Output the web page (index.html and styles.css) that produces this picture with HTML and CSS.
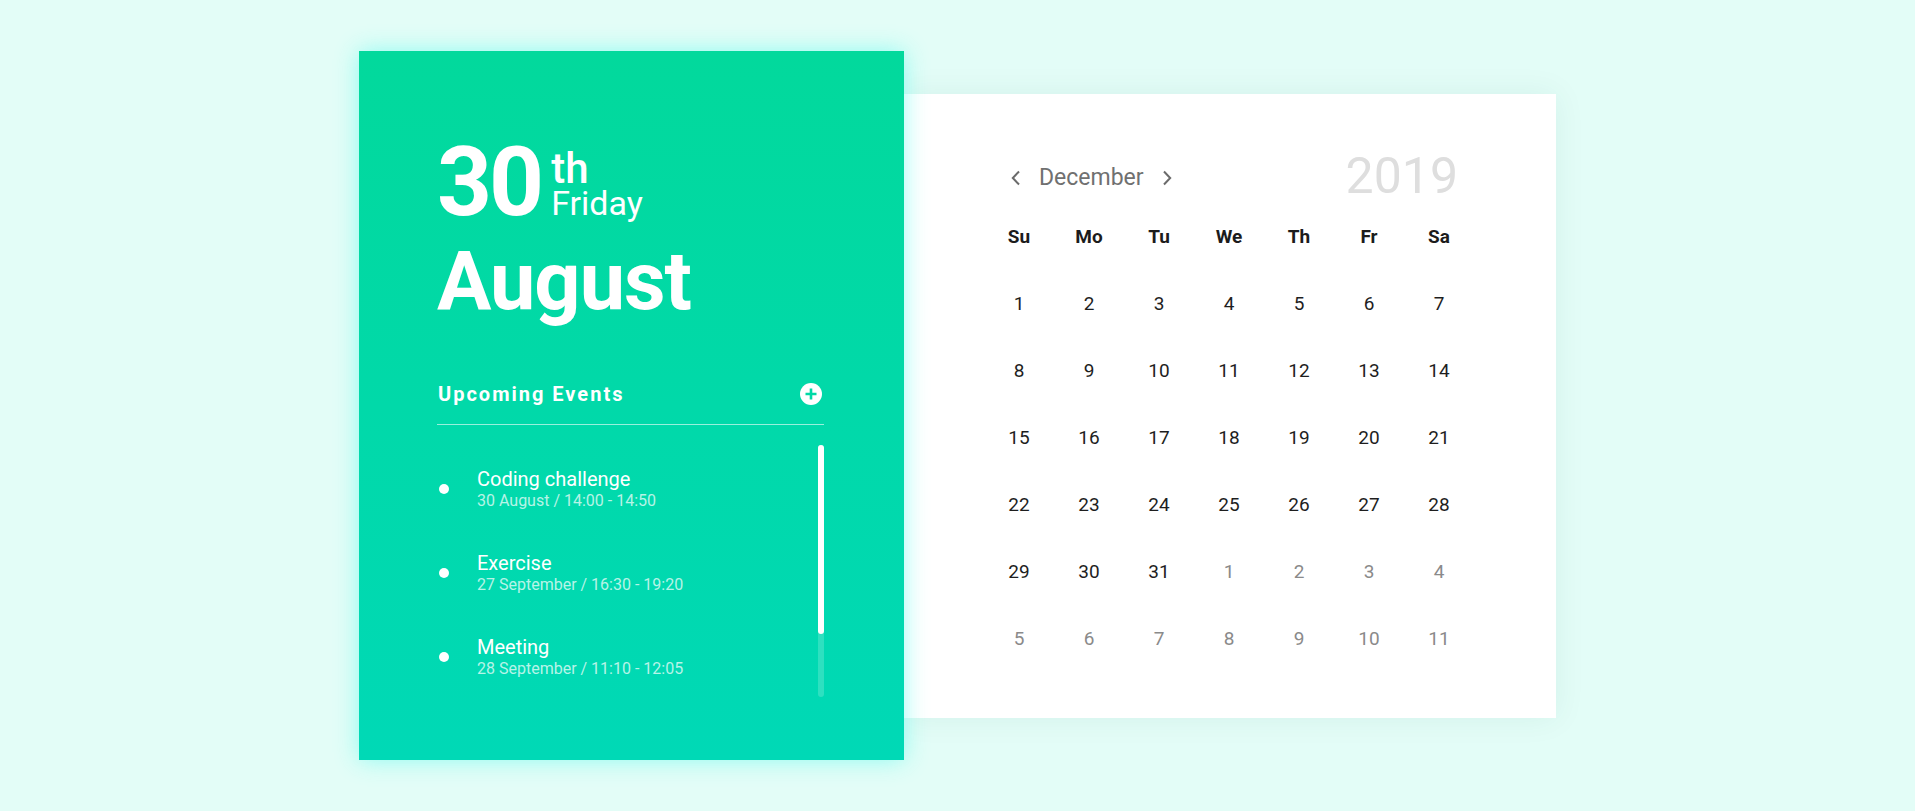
FILE: index.html
```html
<!DOCTYPE html>
<html lang="en">
<head>
<meta charset="utf-8">
<title>Calendar</title>
<link rel="stylesheet" href="styles.css">
</head>
<body>
<main class="stage">
  <section class="today">
    <div class="date">
      <span class="day-num">30</span>
      <div class="date-side">
        <span class="suffix">th</span>
        <span class="weekday">Friday</span>
      </div>
    </div>
    <h1 class="month">August</h1>
    <div class="events-head">
      <h2 class="events-title">Upcoming Events</h2>
      <button class="add-btn" aria-label="Add event">
        <svg viewBox="0 0 22 22" width="22" height="22"><circle cx="11" cy="11" r="11" fill="#fff"/><path d="M11 5.5v11M5.5 11h11" stroke="#00d9a6" stroke-width="2.6"/></svg>
      </button>
    </div>
    <div class="events-body">
      <ul class="events">
        <li class="event"><span class="dot"></span><div class="event-text"><div class="event-name">Coding challenge</div><div class="event-time">30 August / 14:00 - 14:50</div></div></li>
        <li class="event"><span class="dot"></span><div class="event-text"><div class="event-name">Exercise</div><div class="event-time">27 September / 16:30 - 19:20</div></div></li>
        <li class="event"><span class="dot"></span><div class="event-text"><div class="event-name">Meeting</div><div class="event-time">28 September / 11:10 - 12:05</div></div></li>
      </ul>
      <div class="scrollbar"><div class="thumb"></div></div>
    </div>
  </section>
  <section class="calendar">
    <div class="cal-head">
      <div class="month-nav">
        <svg class="chev" viewBox="0 0 12 16" width="12" height="16"><path d="M9 1.5 2.8 8 9 14.5" fill="none" stroke="#6b6b6b" stroke-width="2"/></svg>
        <span class="cal-month">December</span>
        <svg class="chev" viewBox="0 0 12 16" width="12" height="16"><path d="M3 1.5 9.2 8 3 14.5" fill="none" stroke="#6b6b6b" stroke-width="2"/></svg>
      </div>
      <span class="cal-year">2019</span>
    </div>
    <div class="grid">
      <span class="wd">Su</span><span class="wd">Mo</span><span class="wd">Tu</span><span class="wd">We</span><span class="wd">Th</span><span class="wd">Fr</span><span class="wd">Sa</span>
      <span>1</span><span>2</span><span>3</span><span>4</span><span>5</span><span>6</span><span>7</span>
      <span>8</span><span>9</span><span>10</span><span>11</span><span>12</span><span>13</span><span>14</span>
      <span>15</span><span>16</span><span>17</span><span>18</span><span>19</span><span>20</span><span>21</span>
      <span>22</span><span>23</span><span>24</span><span>25</span><span>26</span><span>27</span><span>28</span>
      <span>29</span><span>30</span><span>31</span><span class="other">1</span><span class="other">2</span><span class="other">3</span><span class="other">4</span>
      <span class="other">5</span><span class="other">6</span><span class="other">7</span><span class="other">8</span><span class="other">9</span><span class="other">10</span><span class="other">11</span>
    </div>
  </section>
</main>
</body>
</html>
```

FILE: styles.css
```css
* { box-sizing: border-box; }

html, body {
  margin: 0;
  height: 100%;
}

body {
  background: #e3fdf7;
  font-family: Roboto, "Liberation Sans", sans-serif;
}

.stage {
  height: 100%;
  display: flex;
  align-items: center;
  justify-content: center;
}

/* Left card */
.today {
  position: relative;
  z-index: 2;
  width: 545px;
  height: 709px;
  padding: 83px 80px 0 78px;
  background: linear-gradient(to bottom, #02d99c, #00d9b6);
  box-shadow: 0 0 22px rgba(40, 250, 235, 0.45);
  color: #fff;
}

.date {
  display: flex;
  align-items: flex-end;
  gap: 10px;
}

.day-num {
  font-size: 96px;
  font-weight: 700;
  line-height: 96px;
  letter-spacing: -3px;
}

.date-side {
  display: flex;
  flex-direction: column;
  margin-bottom: 11px;
}

.suffix {
  font-size: 42px;
  font-weight: 500;
  line-height: 32px;
  margin-bottom: 2px;
}

.weekday {
  font-size: 34px;
  font-weight: 400;
  line-height: 32px;
}

.month {
  margin: 11px 0 0;
  font-size: 81px;
  font-weight: 700;
  line-height: 82px;
  letter-spacing: -1px;
}

.events-head {
  margin-top: 59px;
  display: flex;
  align-items: center;
  justify-content: space-between;
  padding-bottom: 18px;
  border-bottom: 1px solid rgba(255, 255, 255, 0.6);
}

.events-title {
  margin: 0 0 0 1px;
  font-size: 20px;
  font-weight: 700;
  line-height: 24px;
  letter-spacing: 2px;
}

.add-btn {
  margin: 0 2px 0 0;
  padding: 0;
  border: 0;
  background: none;
  width: 22px;
  height: 22px;
  display: flex;
}

.events-body {
  margin-top: 20px;
  display: flex;
  height: 252px;
}

.events {
  flex: 1;
  margin: 0;
  padding: 0;
  list-style: none;
}

.event {
  height: 84px;
  display: flex;
  align-items: center;
}

.dot {
  width: 10px;
  height: 10px;
  border-radius: 50%;
  background: #fff;
  margin: 3px 28px 0 2px;
  flex: none;
}

.event-text {
  margin-top: 4px;
}

.event-name {
  font-size: 20px;
  line-height: 20px;
}

.event-time {
  margin-top: 3px;
  font-size: 16px;
  line-height: 18px;
  color: rgba(255, 255, 255, 0.72);
}

.scrollbar {
  width: 6px;
  height: 100%;
  border-radius: 3px;
  background: rgba(255, 255, 255, 0.18);
}

.thumb {
  height: 189px;
  border-radius: 3px;
  background: #fff;
}

/* Right card */
.calendar {
  width: 652px;
  height: 624px;
  padding: 55px 81px 0 80px;
  background: #fff;
  box-shadow: 0 0 30px rgba(0, 90, 70, 0.07);
}

.cal-head {
  height: 54px;
  display: flex;
  align-items: center;
  justify-content: space-between;
  padding: 4px 17px 0 26px;
}

.month-nav {
  display: flex;
  align-items: center;
  gap: 17px;
}

.chev { display: block; }

.cal-month {
  font-size: 23px;
  line-height: 26px;
  color: #707070;
}

.cal-year {
  font-size: 50px;
  line-height: 54px;
  color: #dedede;
  margin-top: -4px;
}

.grid {
  display: grid;
  grid-template-columns: repeat(7, 70px);
  grid-auto-rows: 67px;
  align-items: center;
  justify-items: center;
  font-size: 19px;
  color: #1e1e1e;
}

.grid .wd {
  font-weight: 700;
  color: #1c1c1c;
}

.grid .other {
  color: #8a8a8a;
}
```
